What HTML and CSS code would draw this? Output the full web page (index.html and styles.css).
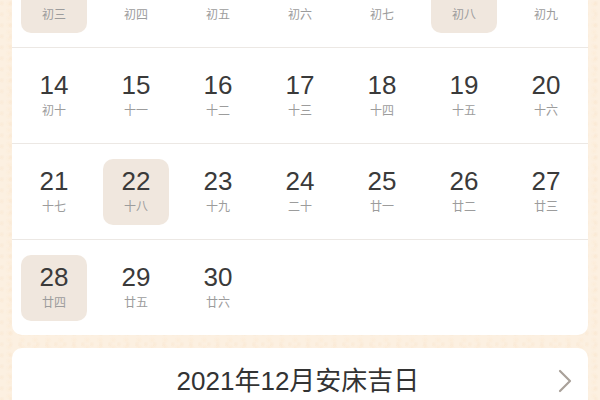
FILE: index.html
```html
<!DOCTYPE html>
<html lang="zh">
<head>
<meta charset="utf-8">
<link rel="stylesheet" href="styles.css">
</head>
<body>
<div class="page">
  <div class="card calendar">
    <div class="row">
      <div class="cell"><div class="day hl"><span class="num"></span><span class="lunar">初三</span></div></div>
      <div class="cell"><div class="day"><span class="num"></span><span class="lunar">初四</span></div></div>
      <div class="cell"><div class="day"><span class="num"></span><span class="lunar">初五</span></div></div>
      <div class="cell"><div class="day"><span class="num"></span><span class="lunar">初六</span></div></div>
      <div class="cell"><div class="day"><span class="num"></span><span class="lunar">初七</span></div></div>
      <div class="cell"><div class="day hl"><span class="num"></span><span class="lunar">初八</span></div></div>
      <div class="cell"><div class="day"><span class="num"></span><span class="lunar">初九</span></div></div>
    </div>
    <div class="row">
      <div class="cell"><div class="day"><span class="num">14</span><span class="lunar">初十</span></div></div>
      <div class="cell"><div class="day"><span class="num">15</span><span class="lunar">十一</span></div></div>
      <div class="cell"><div class="day"><span class="num">16</span><span class="lunar">十二</span></div></div>
      <div class="cell"><div class="day"><span class="num">17</span><span class="lunar">十三</span></div></div>
      <div class="cell"><div class="day"><span class="num">18</span><span class="lunar">十四</span></div></div>
      <div class="cell"><div class="day"><span class="num">19</span><span class="lunar">十五</span></div></div>
      <div class="cell"><div class="day"><span class="num">20</span><span class="lunar">十六</span></div></div>
    </div>
    <div class="row">
      <div class="cell"><div class="day"><span class="num">21</span><span class="lunar">十七</span></div></div>
      <div class="cell"><div class="day hl"><span class="num">22</span><span class="lunar">十八</span></div></div>
      <div class="cell"><div class="day"><span class="num">23</span><span class="lunar">十九</span></div></div>
      <div class="cell"><div class="day"><span class="num">24</span><span class="lunar">二十</span></div></div>
      <div class="cell"><div class="day"><span class="num">25</span><span class="lunar">廿一</span></div></div>
      <div class="cell"><div class="day"><span class="num">26</span><span class="lunar">廿二</span></div></div>
      <div class="cell"><div class="day"><span class="num">27</span><span class="lunar">廿三</span></div></div>
    </div>
    <div class="row last">
      <div class="cell"><div class="day hl"><span class="num">28</span><span class="lunar">廿四</span></div></div>
      <div class="cell"><div class="day"><span class="num">29</span><span class="lunar">廿五</span></div></div>
      <div class="cell"><div class="day"><span class="num">30</span><span class="lunar">廿六</span></div></div>
      <div class="cell"></div>
      <div class="cell"></div>
      <div class="cell"></div>
      <div class="cell"></div>
    </div>
  </div>
  <div class="card link">
    <span class="spacer"></span>
    <span class="link-title">2021年12月安床吉日</span>
    <svg class="chev" width="14" height="24" viewBox="0 0 14 24"><polyline points="2,2 12,12 2,22" fill="none" stroke="#a9a19a" stroke-width="2.2" stroke-linecap="round" stroke-linejoin="round"/></svg>
  </div>
</div>
</body>
</html>
```

FILE: styles.css
```css
html, body {
  margin: 0;
  padding: 0;
}
body {
  width: 600px;
  height: 400px;
  overflow: hidden;
  background-color: #fcf0e1;
  background-image:
    radial-gradient(circle at 20% 30%, rgba(245, 222, 195, 0.35) 0, rgba(245, 222, 195, 0) 3px),
    radial-gradient(circle at 70% 60%, rgba(250, 230, 205, 0.4) 0, rgba(250, 230, 205, 0) 4px);
  background-size: 9px 11px, 13px 7px;
  font-family: "Liberation Sans", "Noto Sans CJK SC", sans-serif;
}
.page {
  padding: 0 12px;
}
.card {
  background: #ffffff;
  border-radius: 10px;
}
.calendar {
  margin-top: -48px;
}
.row {
  display: grid;
  grid-template-columns: repeat(7, 82px);
  height: 95px;
  border-bottom: 1px solid #ece8e4;
  padding-left: 1px;
}
.row.last {
  border-bottom: none;
}
.cell {
  display: flex;
  justify-content: center;
  padding-top: 15px;
}
.day {
  width: 66px;
  height: 66px;
  box-sizing: border-box;
  padding-top: 8px;
  border-radius: 10px;
  display: flex;
  flex-direction: column;
  align-items: center;
}
.day.hl {
  background: #f0e7de;
}
.num {
  display: block;
  height: 28px;
  font-family: "Liberation Sans", sans-serif;
  font-size: 26px;
  line-height: 28px;
  color: #3a3a3a;
}
.lunar {
  margin-top: 3px;
  font-family: "Noto Sans CJK SC", sans-serif;
  font-size: 12px;
  line-height: 16px;
  color: #9c9c9c;
}
.link {
  margin-top: 13px;
  height: 66px;
  display: grid;
  grid-template-columns: 1fr auto 1fr;
  align-items: center;
  padding: 0 16px 0 12px;
}
.link-title {
  font-size: 26px;
  color: #333333;
  line-height: 30px;
}
.chev {
  justify-self: end;
}
```
